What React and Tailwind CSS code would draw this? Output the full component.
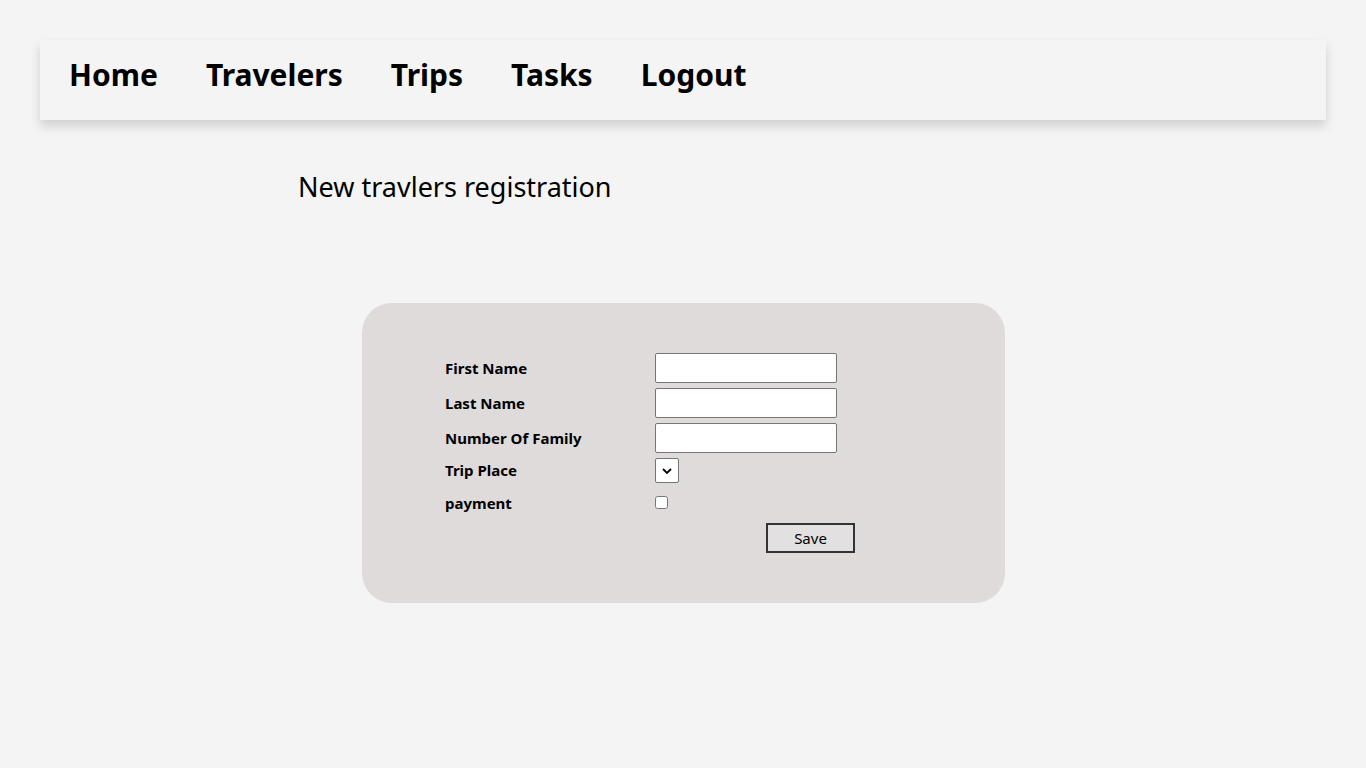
import { useState } from 'react';

const links = ['Home', 'Travelers', 'Trips', 'Tasks', 'Logout'];

export default function App() {
  const [form, setForm] = useState({ firstName: '', lastName: '', family: '', place: '', payment: false });

  const update = (key) => (e) =>
    setForm({ ...form, [key]: e.target.type === 'checkbox' ? e.target.checked : e.target.value });

  return (
    <div className="min-h-screen bg-[#f4f4f4] pt-10 px-10 text-black" style={{ fontFamily: '"Noto Sans", "Open Sans", sans-serif' }}>
      <nav className="h-20 bg-[#f4f4f4] shadow-[0_6px_10px_rgba(0,0,0,0.15)] flex items-center pl-[29px] pb-[11px]">
        {links.map(link => (
          <a key={link} href="#" className="text-[30px] font-bold mr-[48px] leading-none">
            {link}
          </a>
        ))}
      </nav>

      <h2 className="ml-[258px] mt-[49px] text-[27px] leading-[36px]">New travlers registration</h2>

      <div className="ml-[322px] mt-[98px] w-[643px] h-[300px] rounded-[30px] bg-[#dfdbdb] pt-[50px] pl-[83px]">
        <div className="flex flex-col gap-[5px] text-[15px] font-bold">
          <div className="flex items-center h-[30px]">
            <label className="w-[210px]">First Name</label>
            <input value={form.firstName} onChange={update('firstName')} className="w-[182px] h-[30px] bg-white border border-[#767676] rounded-[2px]" />
          </div>
          <div className="flex items-center h-[30px]">
            <label className="w-[210px]">Last Name</label>
            <input value={form.lastName} onChange={update('lastName')} className="w-[182px] h-[30px] bg-white border border-[#767676] rounded-[2px]" />
          </div>
          <div className="flex items-center h-[30px]">
            <label className="w-[210px]">Number Of Family</label>
            <input value={form.family} onChange={update('family')} className="w-[182px] h-[30px] bg-white border border-[#767676] rounded-[2px]" />
          </div>
          <div className="flex items-center h-[25px]">
            <label className="w-[210px]">Trip Place</label>
            <div className="w-6 h-[25px] bg-white border border-[#767676] rounded-[2px] flex items-center justify-center">
              <svg width="10" height="6" viewBox="0 0 10 6">
                <path d="M1 1l4 4 4-4" fill="none" stroke="#000" strokeWidth="1.8" />
              </svg>
            </div>
          </div>
          <div className="flex items-center h-[30px]">
            <label className="w-[210px]">payment</label>
            <input type="checkbox" checked={form.payment} onChange={update('payment')} className="w-[13px] h-[13px] m-0 -mt-[2px]" />
          </div>
          <div className="flex h-[30px] pl-[321px]">
            <button className="w-[89px] h-[30px] border-2 border-[#333] bg-[#e2e0e0] text-[15px] font-normal leading-none">
              Save
            </button>
          </div>
        </div>
      </div>
    </div>
  );
}
